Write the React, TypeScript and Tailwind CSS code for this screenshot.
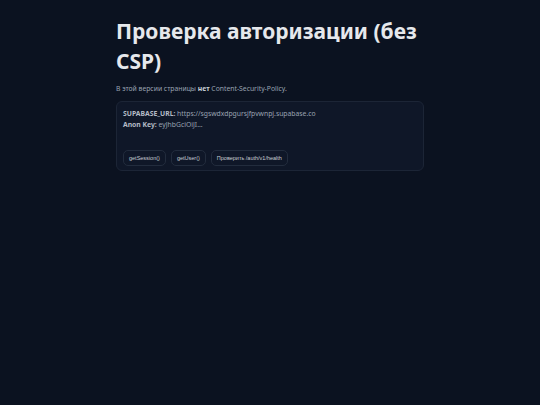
export default function App() {
  const buttons = ["getSession()", "getUser()", "Проверить /auth/v1/health"];
  return (
    <div className="min-h-[405px] w-full bg-[#0b1220] text-[#e5e7eb]" style={{ fontFamily: '"Noto Sans", sans-serif' }}>
      <div className="mx-auto w-[308px] pt-[16px]">
        <h1 className="text-[21px] font-bold leading-[30px] text-[#e6e8ec]">Проверка авторизации (без CSP)</h1>
        <p className="mt-[8px] text-[6.8px] leading-[10px] text-[#9aa3b2]">
          В этой версии страницы <b className="font-bold text-[#c9ced6]">нет</b> Content-Security-Policy.
        </p>
        <div className="mt-[7px] h-[70px] rounded-[6px] border border-[#1c2536] bg-[#0f1728] px-[6px] pt-[6px]">
          <div className="text-[6.8px] leading-[11px] text-[#9aa3b2]">
            <div>
              <b className="font-bold text-[#b5bcc7]">SUPABASE_URL:</b> https://sgswdxdpgursjfpvwnpj.supabase.co
            </div>
            <div>
              <b className="font-bold text-[#b5bcc7]">Anon Key:</b> eyJhbGciOiJI...
            </div>
          </div>
          <div className="mt-[20px] flex gap-[5px]">
            {buttons.map((b) => (
              <button
                key={b}
                className="h-[16px] rounded-[5px] border border-[#222c3d] bg-[#0f1728] px-[5px] text-[5.5px] text-[#c9ced6]"
                style={{ fontFamily: '"Liberation Sans", Arial, sans-serif' }}
              >
                {b}
              </button>
            ))}
          </div>
        </div>
      </div>
    </div>
  );
}
